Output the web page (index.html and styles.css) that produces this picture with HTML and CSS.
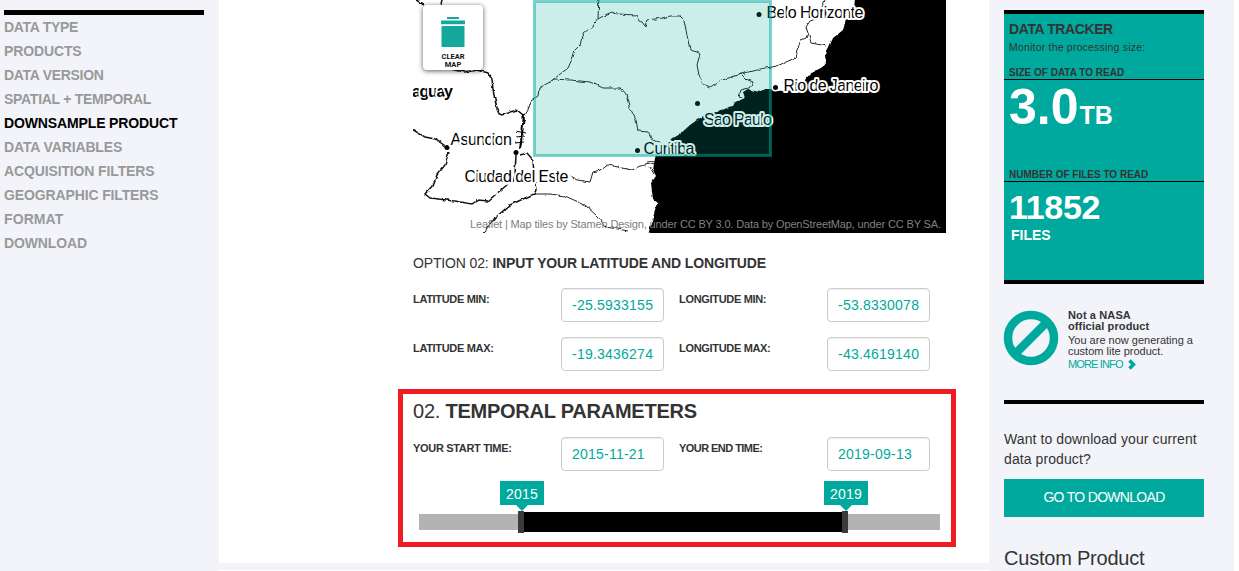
FILE: index.html
```
<!DOCTYPE html>
<html lang="en">
<head>
<meta charset="utf-8">
<title>Data order</title>
<link rel="stylesheet" href="styles.css">
</head>
<body>
<div class="page">
  <nav class="sidebar">
    <ul class="steps">
      <li>DATA TYPE</li>
      <li>PRODUCTS</li>
      <li>DATA VERSION</li>
      <li>SPATIAL + TEMPORAL</li>
      <li class="active">DOWNSAMPLE PRODUCT</li>
      <li>DATA VARIABLES</li>
      <li>ACQUISITION FILTERS</li>
      <li>GEOGRAPHIC FILTERS</li>
      <li>FORMAT</li>
      <li>DOWNLOAD</li>
    </ul>
  </nav>
  <main class="main">
    <section class="panel">
      <div class="map">
        <svg class="map-art" width="533" height="233" viewBox="413 0 533 233">
          <defs>
            <filter id="rough" x="-5%" y="-5%" width="110%" height="110%" color-interpolation-filters="sRGB">
              <feTurbulence type="fractalNoise" baseFrequency="0.16" numOctaves="2" seed="4"/>
              <feDisplacementMap in="SourceGraphic" scale="3.5" xChannelSelector="R" yChannelSelector="G"/>
            </filter>
          </defs>
          <rect x="413" width="533" height="233" fill="#fff"/>
          <g filter="url(#rough)">
            <path d="M855.500-10L854 10 846 20 843 30 833 38 829 47 825 55 826 65 810 74 804 81 798 90 776 91 771 89 765 89 761 92 755 91 748 89 743 92 745 98 735 102 733 106 728 107 717 112 708 113 697 120 690 125 680 134 670 140 660 150 655 157 653 170 656 176 651 183 653 200 657 203 652 220 646 243H960V-10Z"/>
            <g fill="none" stroke="#111" stroke-width="1.500">
              <path d="M405-7 424 5M440 8 443-4M445 68 465 72 478 70 488 73 492 78 493 90 495 100 498 113 503 115 510 112 517 110 523 115 524 120"/>
              <path d="M405 125 425 137 435 139 447 147M449 152 445 165 437 175 433 185 425 194 430 198 455 201 472 204 478 200 488 201 495 195 508 184M516 155 515 175 513 182M520 155 527 153 533 160 534 175 536 190 534 194 510 205 495 218 480 238"/>
            </g>
            <path d="M524 114 522 135 520 149" fill="none" stroke="#000" stroke-width="2"/>
            <path d="M515 131 526 133M516 137 525 136M515 143 524 142" fill="none" stroke="#000"/>
            <g fill="none" stroke="#222" stroke-width="1">
              <path d="M524 117 528 110 531 101 538 96 539 88 550 82 568 68 573 57 575 50 580 45 584 33 593 26 598 19 599-5M598 19 605 15 612 12 617 14 637 15 640 21 642 22 645 26 647 20 663 18 670 16 680 16 684 20 686 30 690 50 697 52 700 54 697 65 699 75 703 84 710 87 718 83 722 80 735 76 741 74 760 69 777 66 795 58 797 50 801 40 806 38 808 33 806 27 810 21 818 18 827-5"/>
              <path d="M809 35 811 43 827 46M741 74 746 79 753 82 749 88 741 90 739 96 745 98M550 82 554 79 570 80 590 82 603 88 621 88 626 94 629 106 636 120 638 131 648 132 652 140 660 142"/>
              <path d="M534 194 550 194 565 196 585 205 598 217 606 227 618 229 628 231M570 176 577 180 590 182 593 172 600 170 608 165 622 168 632 170 640 166 655 163M648 162 655 161M650 167 654 174"/>
            </g>
          </g>
          <g class="dots">
            <circle cx="447" cy="147.500" r="2.500"/><circle cx="516" cy="152.500" r="2.500"/>
            <circle cx="637.500" cy="150.500" r="2.500"/><circle cx="697.500" cy="103.500" r="2.500"/>
            <circle cx="759" cy="14.500" r="2.500"/>
            <circle cx="775.500" cy="87.500" r="4" fill="#fff"/><circle cx="775.500" cy="87.500" r="2.500"/>
          </g>
          <g class="places">
            <text class="country" x="412" y="97" textLength="41">aguay</text>
            <text x="450.500" y="144.500" textLength="61.500">Asuncion</text>
            <text x="464.500" y="182" textLength="104">Ciudad del Este</text>
            <text x="643.500" y="153.500" textLength="51">Curitiba</text>
            <text x="704" y="125" textLength="68">Sao Paulo</text>
            <text x="766.500" y="18" textLength="97">Belo Horizonte</text>
            <text x="783.500" y="91" textLength="95">Rio de Janeiro</text>
          </g>
          <rect x="534.500" y="1.500" width="236" height="154" fill="#00a99d" fill-opacity=".2" stroke="#00a99d" stroke-opacity=".5" stroke-width="3"/>
          <text class="credit" x="470" y="228" textLength="471">Leaflet | Map tiles by Stamen Design, under CC BY 3.0. Data by OpenStreetMap, under CC BY SA.</text>
        </svg>
        <button class="clear-map">
          <svg width="24" height="30" viewBox="0 0 24 30" fill="#14a89d"><path d="M6 0h12v2H6zM0 3.500h24V7.300H0zM.500 9h23v21H.500z"/></svg>
          <span>CLEAR<br>MAP</span>
        </button>
      </div>
      <h3 class="option">OPTION 02: <b>INPUT YOUR LATITUDE AND LONGITUDE</b></h3>
      <div class="fields">
        <label>LATITUDE MIN:</label><div class="field">-25.5933155</div>
        <label>LONGITUDE MIN:</label><div class="field">-53.8330078</div>
        <label>LATITUDE MAX:</label><div class="field">-19.3436274</div>
        <label>LONGITUDE MAX:</label><div class="field">-43.4619140</div>
      </div>
      <div class="temporal">
        <h2>02. <b>TEMPORAL PARAMETERS</b></h2>
        <div class="fields">
          <label>YOUR START TIME:</label><div class="field">2015-11-21</div>
          <label>YOUR END TIME:</label><div class="field">2019-09-13</div>
        </div>
        <div class="slider">
          <div class="range"></div>
          <div class="handle start"><span class="tip">2015</span></div>
          <div class="handle end"><span class="tip">2019</span></div>
        </div>
      </div>
    </section>
    <section class="panel next"></section>
  </main>
  <aside class="aside">
    <section class="tracker">
      <h4>DATA TRACKER</h4>
      <p class="sub">Monitor the processing size:</p>
      <h5>SIZE OF DATA TO READ</h5>
      <div class="size"><span class="num">3.0</span><span class="unit">TB</span></div>
      <h5 class="count-title">NUMBER OF FILES TO READ</h5>
      <div class="count">11852</div>
      <div class="files">FILES</div>
    </section>
    <section class="notice">
      <svg class="ban" width="56" height="56" viewBox="0 0 56 56" fill="none" stroke="#00a99d"><circle cx="28" cy="28" r="23" stroke-width="8.500"/><path d="M12.500 43.500 43.500 12.500" stroke-width="8.500"/></svg>
      <div class="notice-text">
        <b>Not a NASA<br>official product</b>
        <p>You are now generating a<br>custom lite product.</p>
        <a><span class="more">MORE INFO</span><svg width="9" height="11" viewBox="0 0 9 11" fill="none" stroke="#00a99d" stroke-width="3.500"><path d="M1.500 1.500 5.500 5.500 1.500 9.500"/></svg></a>
      </div>
    </section>
    <section class="download">
      <p>Want to download your current<br>data product?</p>
      <a class="go">GO TO DOWNLOAD</a>
      <h2>Custom Product</h2>
    </section>
  </aside>
</div>
</body>
</html>
```
FILE: styles.css
```
* { box-sizing: border-box; }
body, h2, h3, h4, h5, p, ul { margin: 0; padding: 0; }
body { font-family: "Liberation Sans", Arial, sans-serif; font-size: 14px; color: #333; background: #fff; overflow: hidden; }
h2, h3 { font-weight: normal; }
.page { display: flex; width: 1234px; height: 571px; overflow: hidden; background: #f3f4f9; }

.sidebar { width: 219px; padding: 10px 15px 0 4px; }
.steps { list-style: none; border-top: 5px solid #000; font-weight: bold; line-height: 24px; letter-spacing: -.13px; color: #999; white-space: nowrap; }
.steps li:nth-child(4) { letter-spacing: -.28px; }
.steps li:nth-child(1), .steps li:nth-child(3) { letter-spacing: -.3px; }
.steps li:nth-child(9) { letter-spacing: .1px; }
.steps .active { color: #000; }

.main { width: 770px; }
.panel { height: 563px; padding-left: 194px; background: #fff; }
.panel.next { height: 20px; margin-top: 7px; }
.map { position: relative; width: 533px; height: 233px; overflow: hidden; }
.map-art { display: block; }
.places text { font-size: 16px; fill: #000; stroke: #fff; stroke-width: 4px; stroke-linejoin: round; paint-order: stroke; }
.places .country { font-weight: bold; font-size: 16px; }
.credit { font-size: 11px; fill: #808080; }
.clear-map { position: absolute; left: 10px; top: 5px; width: 60px; height: 65px; padding: 12px 0 0; border: 0; border-radius: 4px; background: #fff; box-shadow: 0 1px 5px rgba(0,0,0,.65); display: flex; flex-direction: column; align-items: center; gap: 6px; font: bold 7.5px/7.5px Roboto, sans-serif; color: #111; }

.option { padding-top: 22px; font-size: 14px; line-height: 16px; letter-spacing: -.14px; white-space: nowrap; }
.fields { display: grid; grid-template-columns: 148px 103px 163px 103px; row-gap: 15px; }
.option + .fields { margin-top: 17px; }
.fields label { padding-top: 5px; font-size: 11px; line-height: 13px; font-weight: bold; letter-spacing: -.32px; white-space: nowrap; }
.fields label:nth-of-type(even) { padding-left: 15px; }
.field { height: 34px; padding: 0 10px; border: 1px solid #ccc; border-radius: 4px; box-shadow: inset 0 1px 1px rgba(0,0,0,.075); line-height: 33px; letter-spacing: .23px; color: #00a99d; }

.temporal { width: 558px; height: 158px; margin: 18px 0 0 -15px; padding: 6px 11px 0 10px; border: 5px solid #ef1c24; }
.temporal h2 { font-size: 20px; line-height: 23px; letter-spacing: -.24px; white-space: nowrap; }
.temporal .fields { margin-top: 14px; }
.temporal label:nth-of-type(even) { letter-spacing: -.55px; }
.slider { position: relative; height: 16px; margin: 43px 0 0 6px; background: #b3b3b3; }
.range { position: absolute; left: 104px; top: -2px; width: 324px; height: 20px; background: #000; }
.handle { position: absolute; top: -3px; width: 6px; height: 22px; background: #3b3b3b; }
.handle.start { left: 99px; }
.handle.end { left: 423px; }
.tip { position: absolute; left: -18px; top: -30px; width: 44px; height: 24px; background: #00a99d; color: #fff; text-align: center; line-height: 26px; letter-spacing: .2px; }
.tip::after { content: ""; position: absolute; left: 16px; top: 24px; border: 6px solid transparent; border-top-color: #00a99d; border-bottom: 0; }

.aside { width: 245px; padding: 10px 30px 0 15px; }
.tracker { height: 274px; padding-top: 7px; border: solid #000; border-width: 4px 0; background: #00a99d; }
.tracker h4 { padding-left: 5px; font-size: 14px; line-height: 16px; letter-spacing: -.4px; }
.sub { padding-left: 5px; margin-top: 4px; font-size: 10.5px; line-height: 13px; letter-spacing: .2px; white-space: nowrap; }
.tracker h5 { height: 14px; margin-top: 12px; padding-left: 5px; border-bottom: 1px solid #000; font-size: 10px; line-height: 13px; white-space: nowrap; }
.size { height: 52px; padding-left: 5px; color: #fff; font-weight: bold; line-height: 54px; white-space: nowrap; }
.num { font-size: 50px; }
.unit { font-size: 25px; margin-left: 1px; }
.tracker .count-title { margin-top: 36px; }
.count { padding-left: 5px; margin-top: 7px; font-size: 34px; font-weight: bold; line-height: 37px; height: 38px; letter-spacing: -.3px; color: #fff; }
.files { padding-left: 7px; font-size: 14px; font-weight: bold; line-height: 16px; color: #fff; }
.notice { height: 120px; display: flex; border-bottom: 4px solid #000; padding-top: 26px; gap: 9px; }
.ban { flex: none; margin-left: -1px; }
.notice-text { font-size: 11px; line-height: 11px; white-space: nowrap; }
.notice-text b { letter-spacing: .12px; }
.notice-text p { margin-top: 3px; }
.notice-text a { display: flex; align-items: center; gap: 5px; margin-top: 2px; color: #00a99d; }
.more { letter-spacing: -.85px; }
.download p { padding-top: 25px; line-height: 20px; letter-spacing: .09px; white-space: nowrap; }
.go { display: block; height: 38px; margin-top: 10px; background: #00a99d; color: #fff; text-align: center; line-height: 37px; letter-spacing: -.7px; }
.download h2 { margin-top: 29px; font-size: 20px; line-height: 24px; letter-spacing: -.22px; white-space: nowrap; }
```
